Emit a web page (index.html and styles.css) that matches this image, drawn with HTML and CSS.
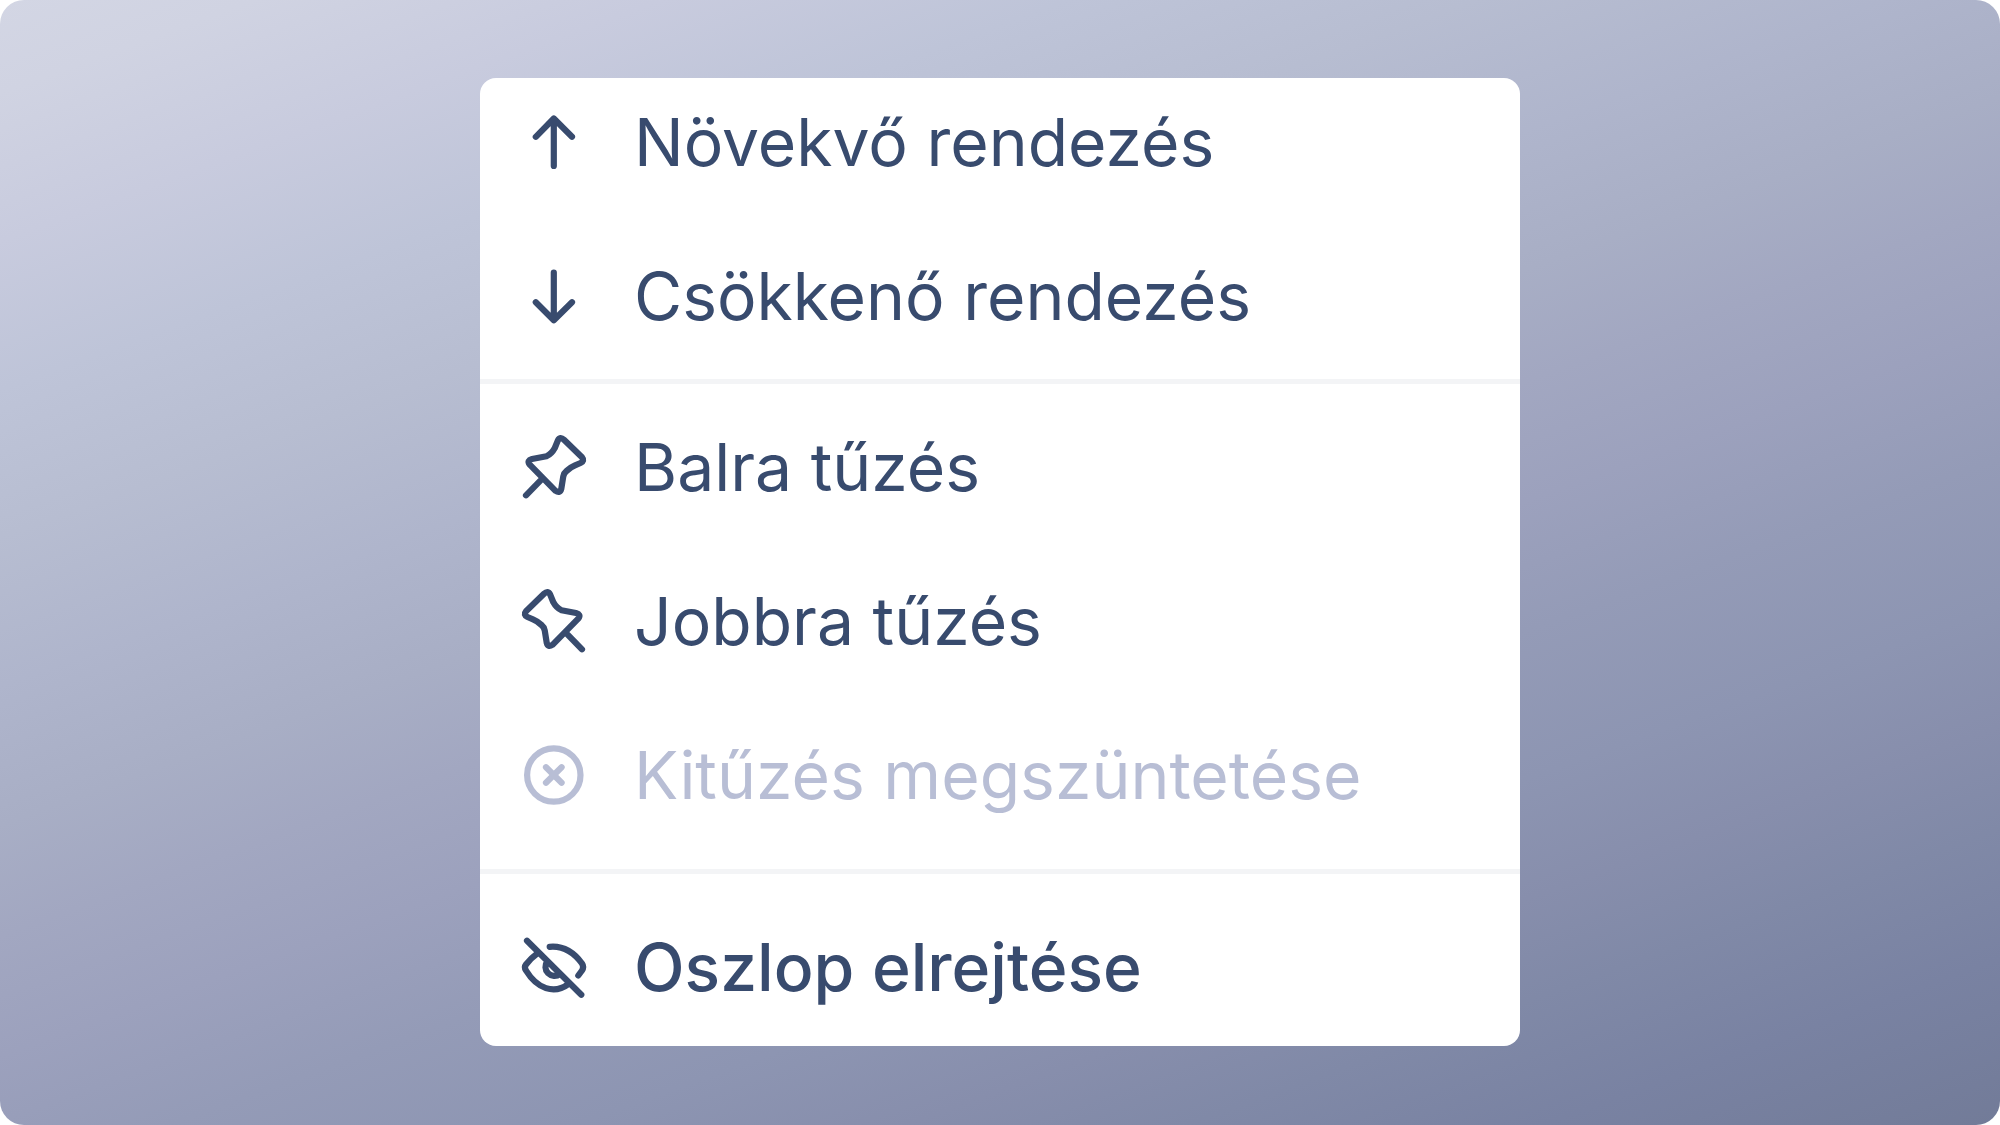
FILE: index.html
```
<!DOCTYPE html>
<html lang="hu">
<head>
<meta charset="utf-8">
<title>Oszlop menü</title>
<link rel="stylesheet" href="styles.css">
</head>
<body>
<main class="stage">
<div class="menu">
<section class="group group-sort">
<div class="item"><svg class="icon" viewBox="0 0 72 72"><path d="M35.8 60V12.5M17.8 30.8L35.8 12.5L54 30.8"/></svg><span class="label">Növekvő rendezés</span></div>
<div class="item"><svg class="icon" viewBox="0 0 72 72"><path d="M35.8 12.5V60M17.8 42.2L35.8 60.2L54 42.2"/></svg><span class="label">Csökkenő rendezés</span></div>
</section>
<section class="group group-pin">
<div class="item"><svg class="icon" viewBox="0 0 72 72"><path d="M24.3 47.6L8 64.3M11.5 33.3L37.5 59.8Q42 63 43.3 57.8L45.3 45.3Q46 42 48.5 40Q52 36.3 57 34.3L62.5 32Q67 29.8 64 26.3L46 8.8Q42 5 39.8 9.6L36.8 17Q33.5 23 28.5 25.3L14 28Q8.7 29.5 11.5 33.3Z"/></svg><span class="label">Balra tűzés</span></div>
<div class="item"><svg class="icon" viewBox="0 0 72 72"><path transform="matrix(-1 0 0 1 72 0)" d="M24.3 47.6L8 64.3M11.5 33.3L37.5 59.8Q42 63 43.3 57.8L45.3 45.3Q46 42 48.5 40Q52 36.3 57 34.3L62.5 32Q67 29.8 64 26.3L46 8.8Q42 5 39.8 9.6L36.8 17Q33.5 23 28.5 25.3L14 28Q8.7 29.5 11.5 33.3Z"/></svg><span class="label">Jobbra tűzés</span></div>
<div class="item disabled"><svg class="icon" viewBox="0 0 72 72"><circle cx="35.8" cy="36" r="26.7"/><path d="M28 28.2L43.6 43.8M43.6 28.2L28 43.8"/></svg><span class="label">Kitűzés megszüntetése</span></div>
</section>
<section class="group group-hide">
<div class="item strong"><svg class="icon" viewBox="0 0 72 72"><path d="M9 9.7L63.3 63.7M31.7 15.8C46 14.5 56 21.5 64 32.5Q66.3 36 64 39.5L60.3 44.5M19.3 22.5Q13 27 8 33.5Q5.8 36.3 8 39.5C19 57.5 36 64 50.5 53M29.5 30.2A9 9 0 0 0 42 43"/></svg><span class="label">Oszlop elrejtése</span></div>
</section>
</div>
</main>
</body>
</html>
```
FILE: styles.css
```
* { box-sizing: border-box; }
body { margin: 0; background: #fff; font-family: Inter, sans-serif; }
.stage { height: 1125px; padding-top: 78px; border-radius: 24px; background: linear-gradient(160deg, #d3d6e4 0%, #d0d3e2 5%, #c8cbde 13%, #bec4d8 21%, #b7bdd1 29%, #afb5cc 37%, #a8aec5 44.5%, #a2a7c1 50.5%, #9ca1bd 57%, #949bb7 64%, #8d95b2 72%, #878eac 78.5%, #8089a7 84%, #7982a2 91%, #727b98 100%); }
.menu { width: 1040px; height: 968px; margin: 0 auto; overflow: hidden; background: #fff; border-radius: 16px; color: #384b6e; }
.group { padding-left: 38px; }
.group + .group { border-top: 5px solid #f3f4f6; }
.group-sort { height: 301px; display: flex; flex-direction: column; gap: 26px; }
.group-pin { height: 490px; padding-top: 6px; }
.group-hide { padding-top: 16px; }
.item { height: 154px; display: flex; align-items: center; gap: 44px; }
.group-sort .item { height: 128px; }
.icon { width: 72px; height: 72px; flex: none; fill: none; stroke: currentColor; stroke-width: 6.2; stroke-linecap: round; stroke-linejoin: round; }
.label { font-size: 66px; line-height: 80px; white-space: nowrap; }
.disabled { color: #b8bed5; }
.strong .label { font-weight: 500; }
```
